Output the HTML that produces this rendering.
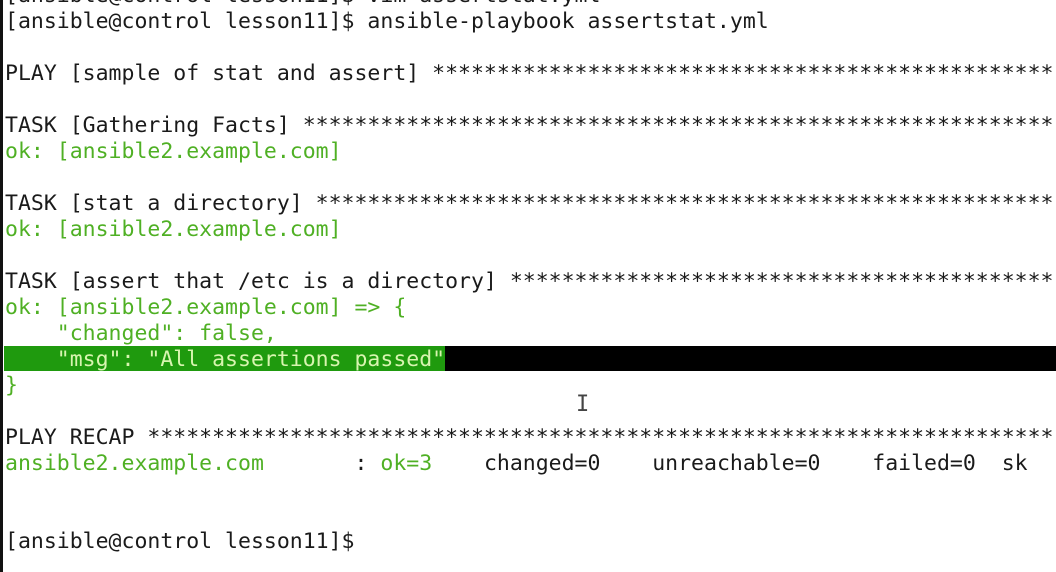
<!DOCTYPE html>
<html><head><style>
html,body{margin:0;padding:0;width:1056px;height:572px;overflow:hidden;background:#fff;}
#t{position:absolute;left:5px;top:-17px;font-family:"DejaVu Sans Mono","Liberation Mono",monospace;font-size:21.5px;line-height:26px;white-space:pre;color:#1a1a1a;}
.g{color:#4fb024;}
.hl{position:absolute;left:4px;top:346px;width:1052px;height:25px;background:#000;}
.hg{position:absolute;left:4px;top:346px;width:441px;height:25px;background:#1f9a0e;}
.hlt{color:#d8f5b0;}
#bar{position:absolute;left:0;top:0;width:3px;height:572px;background:#111;}
#cur{position:absolute;left:576px;top:392px;font-family:"DejaVu Sans Mono",monospace;font-size:22px;color:#444;}
</style></head><body>
<div class="hl"></div><div class="hg"></div>
<div id="t">[ansible@control lesson11]$ vim assertstat.yml
[ansible@control lesson11]$ ansible-playbook assertstat.yml

PLAY [sample of stat and assert] ************************************************

TASK [Gathering Facts] **********************************************************
<span class="g">ok: [ansible2.example.com]</span>

TASK [stat a directory] *********************************************************
<span class="g">ok: [ansible2.example.com]</span>

TASK [assert that /etc is a directory] ******************************************
<span class="g">ok: [ansible2.example.com] =&gt; {
    "changed": false,</span>
<span class="hlt">    "msg": "All assertions passed"</span>
<span class="g">}</span>

PLAY RECAP **********************************************************************
<span class="g">ansible2.example.com</span>       : <span class="g">ok=3</span>    changed=0    unreachable=0    failed=0  sk


[ansible@control lesson11]$</div>
<div id="bar"></div>
<div id="cur">I</div>
</body></html>
